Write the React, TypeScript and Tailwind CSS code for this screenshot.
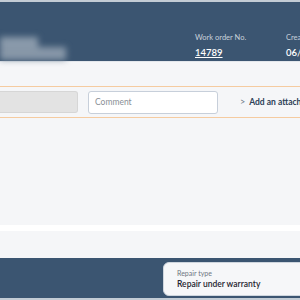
export default function App() {
  return (
    <div className="w-[300px] h-[300px] overflow-hidden bg-[#f5f6f8] font-['Lato',sans-serif] flex flex-col">
      <div className="h-[2px] shrink-0 bg-[#c3ccd5]" />
      <header className="h-[59px] shrink-0 bg-[#3b5571] flex items-end pb-[1px]">
        <div className="w-[195px] shrink-0 flex flex-col blur-[3px] leading-none">
          <div className="w-[38px] h-[10px] bg-[#8a9aab]" />
          <div className="w-[66px] h-[13px] bg-[#8797a8]" />
        </div>
        <div className="w-[91px] shrink-0 flex flex-col leading-none pb-[3px]">
          <span className="text-[7.5px] text-[#c8d1db]">Work order No.</span>
          <span className="text-[9.5px] font-semibold text-white underline mt-[6px]">14789</span>
        </div>
        <div className="shrink-0 flex flex-col leading-none pb-[3px] whitespace-nowrap">
          <span className="text-[7.5px] text-[#c8d1db]">Created</span>
          <span className="text-[9.5px] font-semibold text-white mt-[6px]">06/14/2024</span>
        </div>
      </header>
      <div className="h-[1px] shrink-0 bg-[#e3e7ec]" />
      <div className="h-[24px] shrink-0" />
      <div className="h-[32px] shrink-0 border-y border-[#f5cba0] flex items-center whitespace-nowrap">
        <div className="w-[78px] h-[22px] shrink-0 bg-[#e3e3e3] border border-l-0 border-[#d6d6d6] rounded-r-[3px]" />
        <div className="ml-[10px] w-[130px] h-[23px] shrink-0 bg-white border border-[#c7cfda] rounded-[3px] flex items-center px-[6px]">
          <span className="text-[8.5px] text-[#8a8f96]">Comment</span>
        </div>
        <div className="ml-[22px] flex items-center gap-[4px] text-[#2c3f57]">
          <span className="text-[9px] text-[#6b7684]">&gt;</span>
          <span className="text-[8.5px] font-bold">Add an attachment</span>
        </div>
      </div>
      <div className="h-[107px] shrink-0" />
      <div className="h-[6px] shrink-0 bg-white" />
      <div className="h-[27px] shrink-0" />
      <footer className="h-[40px] shrink-0 bg-[#3b5571] pt-[4px] pl-[163px]">
        <div className="w-[160px] h-[34px] bg-[#f6f7f9] border border-[#cfd6de] rounded-l-[6px] flex flex-col justify-center pl-[13px] leading-none whitespace-nowrap">
          <span className="text-[7px] text-[#6e7682]">Repair type</span>
          <span className="text-[8.5px] font-semibold text-[#1f2530] mt-[3px]">Repair under warranty</span>
        </div>
      </footer>
      <div className="h-[2px] shrink-0 bg-[#c3ccd5]" />
    </div>
  );
}
